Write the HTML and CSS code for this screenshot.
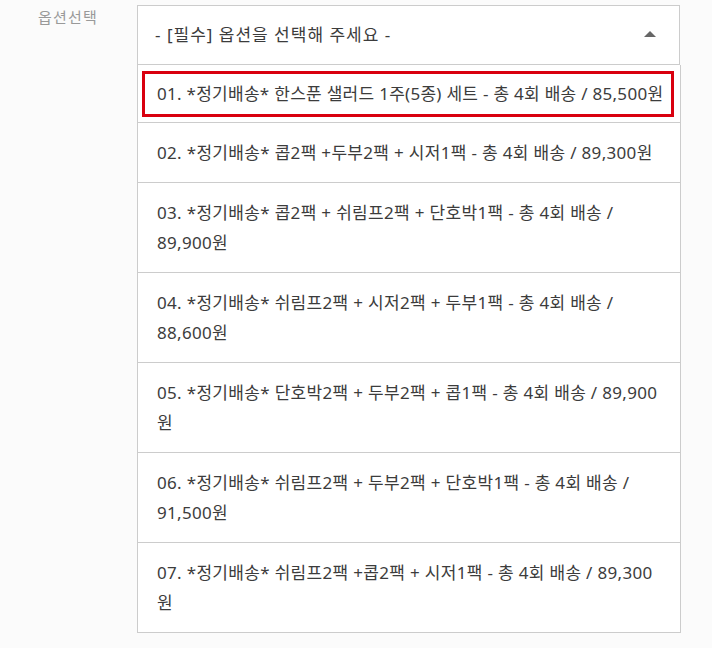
FILE: index.html
```html
<!DOCTYPE html>
<html lang="ko">
<head>
<meta charset="utf-8">
<link rel="stylesheet" href="styles.css">
</head>
<body>
<div class="option-row">
  <div class="label">옵션선택</div>
  <div class="select-wrap">
    <div class="select">
      <span class="select-text">- [필수] 옵션을 선택해 주세요 -</span>
      <span class="arrow"></span>
    </div>
    <ul class="list">
      <li class="item item-active"><div class="focus">01. *정기배송* 한스푼 샐러드 1주(5종) 세트 - 총 4회 배송 / 85,500원</div></li>
      <li class="item">02. *정기배송* 콥2팩 +두부2팩 + 시저1팩 - 총 4회 배송 / 89,300원</li>
      <li class="item">03. *정기배송* 콥2팩 + 쉬림프2팩 + 단호박1팩 - 총 4회 배송 /<br>89,900원</li>
      <li class="item">04. *정기배송* 쉬림프2팩 + 시저2팩 + 두부1팩 - 총 4회 배송 /<br>88,600원</li>
      <li class="item">05. *정기배송* 단호박2팩 + 두부2팩 + 콥1팩 - 총 4회 배송 / 89,900<br>원</li>
      <li class="item">06. *정기배송* 쉬림프2팩 + 두부2팩 + 단호박1팩 - 총 4회 배송 /<br>91,500원</li>
      <li class="item">07. *정기배송* 쉬림프2팩 +콥2팩 + 시저1팩 - 총 4회 배송 / 89,300<br>원</li>
    </ul>
  </div>
</div>
</body>
</html>
```
FILE: styles.css
```css
html, body {
  margin: 0;
  padding: 0;
  background: #fbfbfb;
}
body {
  font-family: "Noto Sans", "Noto Sans CJK KR", sans-serif;
  color: #444;
}
.option-row {
  display: flex;
  align-items: flex-start;
  padding-top: 5px;
}
.label {
  width: 99px;
  padding-left: 38px;
  font-size: 15px;
  line-height: 24px;
  letter-spacing: 1.2px;
  color: #999;
}
.select-wrap {
  width: 544px;
}
.select {
  display: flex;
  align-items: center;
  justify-content: space-between;
  box-sizing: border-box;
  width: 543px;
  height: 60px;
  border: 1px solid #cccccc;
  background: #fff;
  padding: 0 23px 0 17px;
}
.select-text {
  font-size: 17px;
  line-height: 30px;
  letter-spacing: 1px;
  color: #3c3c3c;
}
.arrow {
  width: 0;
  height: 0;
  border-left: 6px solid transparent;
  border-right: 6px solid transparent;
  border-bottom: 6px solid #666;
  margin-top: -2px;
}
.list {
  list-style: none;
  margin: 0;
  padding: 0;
  border: 1px solid #cccccc;
  border-top: none;
  background: #fff;
}
.item {
  font-size: 17px;
  line-height: 30px;
  padding: 15px 10px 14px 19px;
  border-bottom: 1px solid #cccccc;
  color: #3c3c3c;
  letter-spacing: 0.32px;
  white-space: nowrap;
}
.item:last-child {
  border-bottom: none;
}
.item-active {
  padding: 6px 6px 5px 4px;
}
.focus {
  border: 3px solid #d9000f;
  padding: 5px 8px 5px 12px;
  letter-spacing: 0.28px;
}
```
